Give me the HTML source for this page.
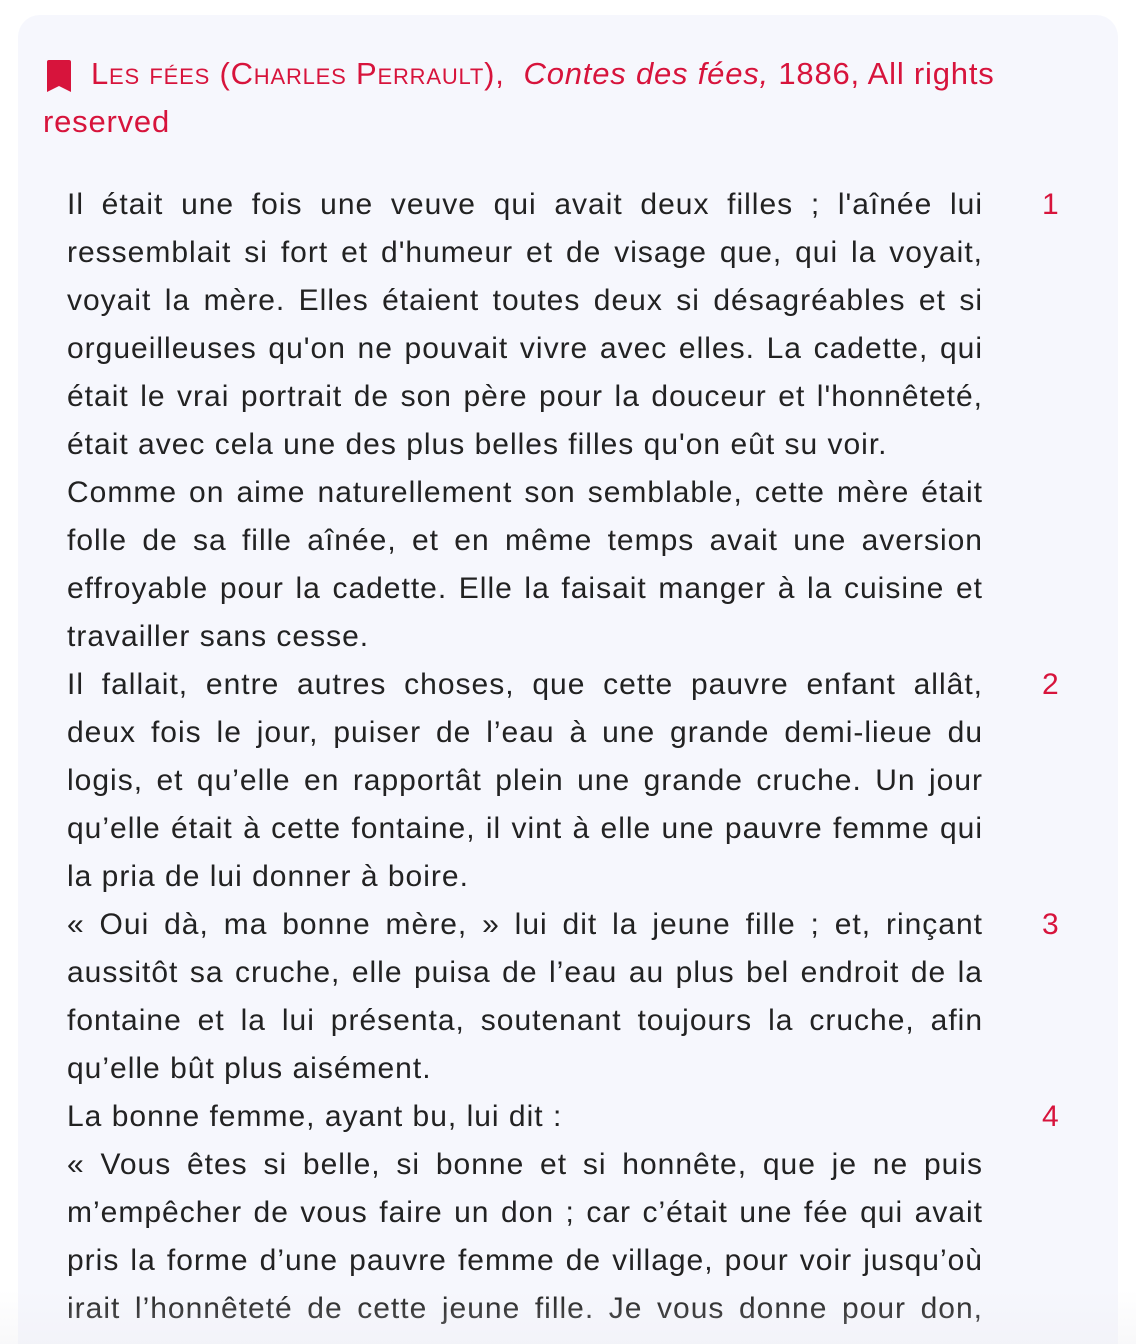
<!DOCTYPE html>
<html><head><meta charset="utf-8"><style>
html,body{margin:0;padding:0;background:#fff;width:1136px;height:1344px;overflow:hidden}
body{font-family:"Liberation Sans",sans-serif;position:relative}
.wrap{position:absolute;left:0;top:0;width:1136px;height:1344px;overflow:hidden}
.card{position:absolute;left:18px;top:15px;width:1100px;height:1400px;background:#f6f7fd;border-radius:22px}
.h{position:absolute;left:43px;color:#d7143c;font-size:31px;line-height:48px;white-space:nowrap;letter-spacing:0.8px}
.sc{font-variant:small-caps}
.l{position:absolute;left:67px;width:916px;font-size:30px;letter-spacing:1px;line-height:48px;color:#222;text-align:justify;text-align-last:justify;white-space:nowrap;margin-top:1px}
.l.e{text-align-last:left}
.n{position:absolute;left:1042px;font-size:30px;line-height:48px;color:#d7143c;margin-top:1px}
.fade{position:absolute;left:0;top:1290px;width:1136px;height:54px;background:linear-gradient(to bottom,rgba(240,240,244,0),rgba(236,236,240,0.35))}
</style></head><body><div class="wrap">
<div class="card"></div>
<svg style="position:absolute;left:46px;top:60px" width="26" height="32" viewBox="0 0 26 32"><path d="M3 0H23Q25 0 25 2V32L13 26L1 32V2Q1 0 3 0Z" fill="#d7143c"/></svg>
<div class="h" style="top:50px;left:91px"><span class="sc">Les fées (Charles Perrault)</span>,&nbsp; <i>Contes des fées,</i> 1886, All rights</div>
<div class="h" style="top:98px">reserved</div>
<div class="l" style="top:180px">Il était une fois une veuve qui avait deux filles ; l'aînée lui</div>
<div class="l" style="top:228px">ressemblait si fort et d'humeur et de visage que, qui la voyait,</div>
<div class="l" style="top:276px">voyait la mère. Elles étaient toutes deux si désagréables et si</div>
<div class="l" style="top:324px">orgueilleuses qu'on ne pouvait vivre avec elles. La cadette, qui</div>
<div class="l" style="top:372px">était le vrai portrait de son père pour la douceur et l'honnêteté,</div>
<div class="l e" style="top:420px">était avec cela une des plus belles filles qu'on eût su voir.</div>
<div class="l" style="top:468px">Comme on aime naturellement son semblable, cette mère était</div>
<div class="l" style="top:516px">folle de sa fille aînée, et en même temps avait une aversion</div>
<div class="l" style="top:564px">effroyable pour la cadette. Elle la faisait manger à la cuisine et</div>
<div class="l e" style="top:612px">travailler sans cesse.</div>
<div class="l" style="top:660px">Il fallait, entre autres choses, que cette pauvre enfant allât,</div>
<div class="l" style="top:708px">deux fois le jour, puiser de l’eau à une grande demi-lieue du</div>
<div class="l" style="top:756px">logis, et qu’elle en rapportât plein une grande cruche. Un jour</div>
<div class="l" style="top:804px">qu’elle était à cette fontaine, il vint à elle une pauvre femme qui</div>
<div class="l e" style="top:852px">la pria de lui donner à boire.</div>
<div class="l" style="top:900px">« Oui dà, ma bonne mère, » lui dit la jeune fille ; et, rinçant</div>
<div class="l" style="top:948px">aussitôt sa cruche, elle puisa de l’eau au plus bel endroit de la</div>
<div class="l" style="top:996px">fontaine et la lui présenta, soutenant toujours la cruche, afin</div>
<div class="l e" style="top:1044px">qu’elle bût plus aisément.</div>
<div class="l e" style="top:1092px">La bonne femme, ayant bu, lui dit :</div>
<div class="l" style="top:1140px">« Vous êtes si belle, si bonne et si honnête, que je ne puis</div>
<div class="l" style="top:1188px">m’empêcher de vous faire un don ; car c’était une fée qui avait</div>
<div class="l" style="top:1236px">pris la forme d’une pauvre femme de village, pour voir jusqu’où</div>
<div class="l" style="top:1284px">irait l’honnêteté de cette jeune fille. Je vous donne pour don,</div>
<div class="l" style="top:1332px">continua la fée, qu’à chaque parole que vous direz, il vous</div>
<div class="n" style="top:180px">1</div>
<div class="n" style="top:660px">2</div>
<div class="n" style="top:900px">3</div>
<div class="n" style="top:1092px">4</div>
<div class="fade"></div>
</div></body></html>
